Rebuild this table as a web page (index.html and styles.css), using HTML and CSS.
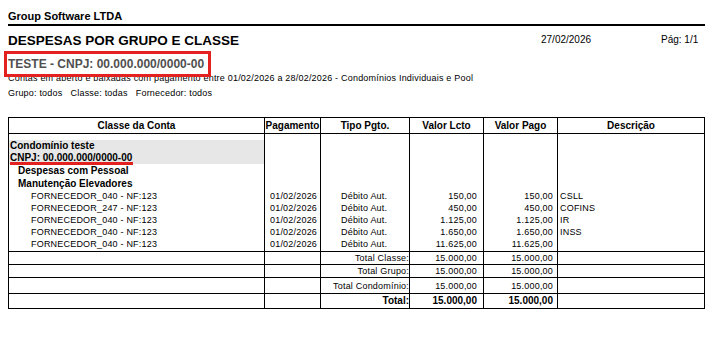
FILE: index.html
```html
<!DOCTYPE html>
<html lang="pt-BR">
<head>
<meta charset="utf-8">
<title>Despesas por Grupo e Classe</title>
<link rel="stylesheet" href="styles.css">
</head>
<body>
<div class="page">
  <header class="report-head">
    <div class="company">Group Software LTDA</div>
    <div class="title-row">
      <h1 class="title">DESPESAS POR GRUPO E CLASSE</h1>
      <div class="date">27/02/2026</div>
      <div class="pageno">Pág: 1/1</div>
    </div>
    <div class="entity-line"><span class="entity">TESTE - CNPJ: 00.000.000/0000-00</span></div>
    <p class="filter">Contas em aberto e baixadas com pagamento entre 01/02/2026 a 28/02/2026 - Condomínios Individuais e Pool</p>
    <p class="filter filter-2">Grupo: todos   Classe: todas   Fornecedor: todos</p>
  </header>

  <table class="report">
    <colgroup>
      <col class="c-conta"><col class="c-pag"><col class="c-tipo"><col class="c-lcto"><col class="c-pago"><col class="c-desc">
    </colgroup>
    <thead>
      <tr>
        <th>Classe da Conta</th>
        <th>Pagamento</th>
        <th>Tipo Pgto.</th>
        <th>Valor Lcto</th>
        <th>Valor Pago</th>
        <th>Descrição</th>
      </tr>
    </thead>
    <tbody class="body">
      <tr class="gap"><td></td><td></td><td></td><td></td><td></td><td></td></tr>
      <tr class="cond"><td class="shade">Condomínio teste</td><td></td><td></td><td></td><td></td><td></td></tr>
      <tr class="cond"><td class="shade"><span class="mark">CNPJ: 00.000.000/0000-00</span></td><td></td><td></td><td></td><td></td><td></td></tr>
      <tr class="grp"><td class="lvl1">Despesas com Pessoal</td><td></td><td></td><td></td><td></td><td></td></tr>
      <tr class="grp"><td class="lvl1">Manutenção Elevadores</td><td></td><td></td><td></td><td></td><td></td></tr>
      <tr class="item"><td class="lvl2">FORNECEDOR_040 - NF:123</td><td class="dt">01/02/2026</td><td class="tp">Débito Aut.</td><td class="num">150,00</td><td class="num">150,00</td><td class="desc">CSLL</td></tr>
      <tr class="item"><td class="lvl2">FORNECEDOR_247 - NF:123</td><td class="dt">01/02/2026</td><td class="tp">Débito Aut.</td><td class="num">450,00</td><td class="num">450,00</td><td class="desc">COFINS</td></tr>
      <tr class="item"><td class="lvl2">FORNECEDOR_040 - NF:123</td><td class="dt">01/02/2026</td><td class="tp">Débito Aut.</td><td class="num">1.125,00</td><td class="num">1.125,00</td><td class="desc">IR</td></tr>
      <tr class="item"><td class="lvl2">FORNECEDOR_040 - NF:123</td><td class="dt">01/02/2026</td><td class="tp">Débito Aut.</td><td class="num">1.650,00</td><td class="num">1.650,00</td><td class="desc">INSS</td></tr>
      <tr class="item last"><td class="lvl2">FORNECEDOR_040 - NF:123</td><td class="dt">01/02/2026</td><td class="tp">Débito Aut.</td><td class="num">11.625,00</td><td class="num">11.625,00</td><td class="desc"></td></tr>
    </tbody>
    <tbody class="totals">
      <tr class="t-classe"><td></td><td></td><td class="lbl">Total Classe:</td><td class="num">15.000,00</td><td class="num">15.000,00</td><td></td></tr>
      <tr class="t-grupo"><td></td><td></td><td class="lbl">Total Grupo:</td><td class="num">15.000,00</td><td class="num">15.000,00</td><td></td></tr>
      <tr class="t-cond"><td></td><td></td><td class="lbl">Total Condomínio:</td><td class="num">15.000,00</td><td class="num">15.000,00</td><td></td></tr>
      <tr class="t-total"><td></td><td></td><td class="lbl tail">Total:</td><td class="num">15.000,00</td><td class="num pago">15.000,00</td><td></td></tr>
    </tbody>
  </table>
</div>
</body>
</html>
```

FILE: styles.css
```css
* { box-sizing: border-box; }

html, body {
  margin: 0;
  padding: 0;
  background: #fff;
}

body {
  font-family: "Liberation Sans", Arial, sans-serif;
  color: #000;
}

.page {
  width: 697px;
  margin-left: 8px;
  padding-top: 9px;
}

.company {
  font-size: 11px;
  font-weight: bold;
  line-height: 14px;
  padding-bottom: 1px;
  border-bottom: 2px solid #000;
}

.title-row {
  display: grid;
  grid-template-columns: 533px 120px 1fr;
  align-items: start;
  margin-top: 7px;
}

.title {
  margin: 0;
  font-size: 13.5px;
  line-height: 16px;
  font-weight: bold;
}

.date,
.pageno {
  font-size: 10px;
  line-height: 13px;
}

.entity-line {
  margin-top: 8px;
  font-size: 12px;
  line-height: 14px;
  font-weight: bold;
  color: #505050;
}

.entity {
  position: relative;
}

.entity::after {
  content: "";
  position: absolute;
  left: -4px;
  right: -7px;
  top: -6px;
  bottom: -6px;
  border: 3px solid #e3211f;
}

.filter {
  margin: 2px 0 0;
  font-size: 9px;
  line-height: 11px;
  letter-spacing: 0.2px;
  white-space: pre;
}

.filter-2 {
  margin-top: 4px;
}

/* table */
.report {
  width: 697px;
  margin-top: 18px;
  border-collapse: collapse;
  table-layout: fixed;
  border: 1px solid #000;
  font-size: 9px;
}

.c-conta { width: 256px; }
.c-pag { width: 56px; }
.c-tipo { width: 89px; }
.c-lcto { width: 74px; }
.c-pago { width: 74px; }
.c-desc { width: 147px; }

.report th,
.report td {
  padding: 0;
  border-left: 1px solid #000;
  border-right: 1px solid #000;
  white-space: nowrap;
  overflow: visible;
}

.report th {
  border: 1px solid #000;
  font-size: 10px;
  font-weight: bold;
  line-height: 12px;
  height: 16px;
  vertical-align: bottom;
  padding-bottom: 1px;
  text-align: center;
}

.report td {
  line-height: 12px;
  height: 12px;
  letter-spacing: 0.2px;
  vertical-align: top;
}

.gap td {
  height: 6px;
  line-height: 6px;
}

.cond td {
  font-size: 10px;
  font-weight: bold;
  letter-spacing: 0;
}

.shade {
  background: #e7e7e7;
  padding-left: 1px !important;
}

.mark {
  position: relative;
}

.mark::after {
  content: "";
  position: absolute;
  left: 0;
  right: -1px;
  bottom: -2px;
  height: 3px;
  background: #e3211f;
}

.grp td {
  font-size: 10px;
  font-weight: bold;
  letter-spacing: 0;
  height: 13px;
  line-height: 13px;
}

.report td.lvl1 { padding-left: 9px; }
.report td.lvl2 { padding-left: 22px; }
.report td.dt { padding-left: 5px; }
.report td.tp { padding-left: 20px; }
.report td.num { text-align: right; padding-right: 6px; }
.report td.num + td.num { padding-right: 4px; }
.report td.desc { padding-left: 2px; }

.item.last td {
  height: 14px;
}

.totals td {
  border-top: 1px solid #000;
  border-bottom: 1px solid #000;
}

.report td.lbl {
  text-align: right;
  padding-right: 0;
}

.t-classe td,
.t-grupo td {
  height: 13px;
  line-height: 12px;
}

.t-cond td {
  height: 16px;
  vertical-align: middle;
}

.t-total td {
  height: 15px;
  vertical-align: middle;
  font-size: 10px;
  font-weight: bold;
  letter-spacing: 0;
}

.report .t-total td.pago {
  padding-right: 9px;
}

/* short stray rule below the table at the Tipo Pgto. column edge */
.report td.tail {
  position: relative;
}

.report td.tail::after {
  content: "";
  position: absolute;
  left: -1px;
  top: 100%;
  width: 1px;
  height: 3px;
  background: #000;
}
```
